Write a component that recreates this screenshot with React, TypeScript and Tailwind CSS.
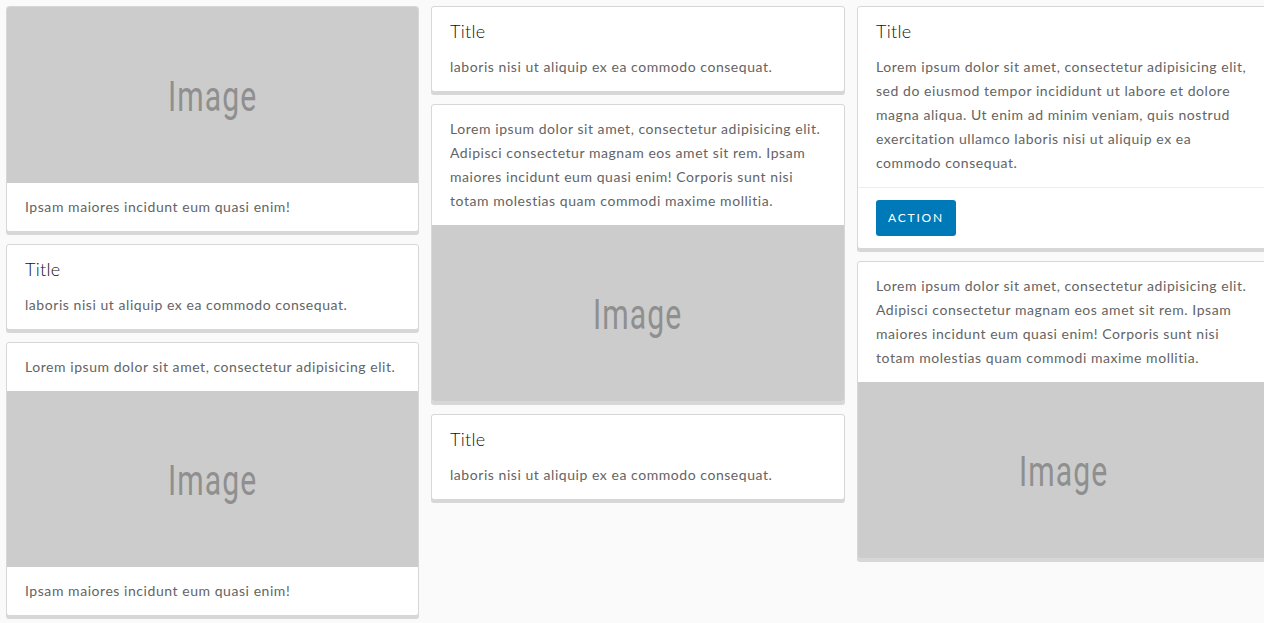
import React from 'react';

const font = { fontFamily: 'Lato, "Noto Sans", sans-serif' };

const ImagePlaceholder: React.FC = () => (
  <div className="h-[176px] bg-[#cccccc] flex items-center justify-center">
    <span
      className="text-[43px] leading-none text-[#8f8f8f] scale-x-[0.7] tracking-[1.5px] pt-[3px]"
      style={{ fontFamily: 'Roboto, sans-serif' }}
    >
      Image
    </span>
  </div>
);

const Card: React.FC<{ children: React.ReactNode }> = ({ children }) => (
  <div className="bg-white border border-[#d7d7d7] rounded-[3px] shadow-[0_3px_0_0_#d7d7d7] overflow-hidden">
    {children}
  </div>
);

const Block: React.FC<{ children: React.ReactNode; className?: string }> = ({ children, className = '' }) => (
  <div className={`px-[18px] py-3 ${className}`}>{children}</div>
);

const Text: React.FC<{ children: React.ReactNode }> = ({ children }) => (
  <p className="text-[14px] leading-6 text-[#646464] tracking-[0.55px]">{children}</p>
);

const Title: React.FC = () => (
  <h3 className="text-[18px] leading-6 text-[#111] font-light tracking-[0.3px]">Title</h3>
);

const TitleCard: React.FC<{ text: string }> = ({ text }) => (
  <Card>
    <Block>
      <Title />
      <div className="mt-3">
        <Text>{text}</Text>
      </div>
    </Block>
  </Card>
);

const longText =
  'Lorem ipsum dolor sit amet, consectetur adipisicing elit. Adipisci consectetur magnam eos amet sit rem. Ipsam maiores incidunt eum quasi enim! Corporis sunt nisi totam molestias quam commodi maxime mollitia.';

export default function App() {
  return (
    <div className="min-h-screen w-screen overflow-hidden bg-[#fafafa]" style={font}>
      <div className="flex items-start pt-[6px] pl-[6px]">
        {/* column 1 */}
        <div className="w-[413px] shrink-0 flex flex-col gap-3">
          <Card>
            <ImagePlaceholder />
            <Block>
              <Text>Ipsam maiores incidunt eum quasi enim!</Text>
            </Block>
          </Card>
          <TitleCard text="laboris nisi ut aliquip ex ea commodo consequat." />
          <Card>
            <Block>
              <Text>Lorem ipsum dolor sit amet, consectetur adipisicing elit.</Text>
            </Block>
            <ImagePlaceholder />
            <Block>
              <Text>Ipsam maiores incidunt eum quasi enim!</Text>
            </Block>
          </Card>
        </div>

        {/* column 2 */}
        <div className="w-[414px] shrink-0 ml-3 flex flex-col gap-3">
          <TitleCard text="laboris nisi ut aliquip ex ea commodo consequat." />
          <Card>
            <Block>
              <Text>{longText}</Text>
            </Block>
            <ImagePlaceholder />
          </Card>
          <TitleCard text="laboris nisi ut aliquip ex ea commodo consequat." />
        </div>

        {/* column 3 */}
        <div className="w-[413px] shrink-0 ml-3 flex flex-col gap-3">
          <Card>
            <Block>
              <Title />
              <div className="mt-3">
                <Text>
                  Lorem ipsum dolor sit amet, consectetur adipisicing elit, sed do eiusmod tempor incididunt ut
                  labore et dolore magna aliqua. Ut enim ad minim veniam, quis nostrud exercitation ullamco laboris
                  nisi ut aliquip ex ea commodo consequat.
                </Text>
              </div>
            </Block>
            <div className="border-t border-[#eeeeee] px-[18px] py-3">
              <button className="h-9 px-3 rounded-[3px] bg-[#0079b8] text-white text-[12px] tracking-[0.15em] uppercase">
                Action
              </button>
            </div>
          </Card>
          <Card>
            <Block>
              <Text>{longText}</Text>
            </Block>
            <ImagePlaceholder />
          </Card>
        </div>
      </div>
    </div>
  );
}
